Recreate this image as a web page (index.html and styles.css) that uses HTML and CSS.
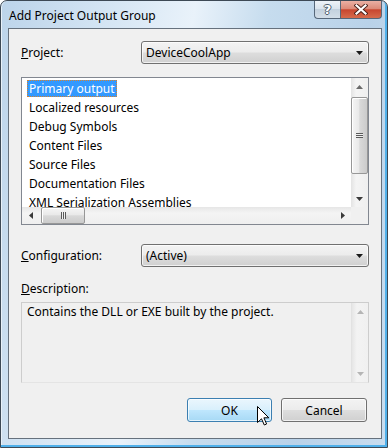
FILE: index.html
```html
<!DOCTYPE html>
<html lang="en">
<head>
  <meta charset="UTF-8">
  <title>Add Project Output Group</title>
  <link rel="stylesheet" href="styles.css">
</head>
<body>
  <div class="window">
    <div class="titlebar">
      <span class="title">Add Project Output Group</span>
      <div class="caption">
        <div class="cap help"><span>?</span></div>
        <div class="cap close">
          <svg width="14" height="11" viewBox="0 0 14 11">
            <path d="M2.5 1.5 L11.5 9.5 M11.5 1.5 L2.5 9.5" stroke="#4a2019" stroke-width="4" stroke-linecap="square"/>
            <path d="M2.5 1.5 L11.5 9.5 M11.5 1.5 L2.5 9.5" stroke="#fff" stroke-width="2.2" stroke-linecap="square"/>
          </svg>
        </div>
      </div>
    </div>

    <div class="client">
      <div class="field">
        <label><u>P</u>roject:</label>
        <div class="combo">
          <span>DeviceCoolApp</span>
          <svg class="drop" width="7" height="4" viewBox="0 0 7 4"><polygon points="0,0 7,0 3.5,4" fill="#1a1a1a"/></svg>
        </div>
      </div>

      <div class="listbox">
        <ul class="items">
          <li><span class="selected">Primary output</span></li>
          <li><span>Localized resources</span></li>
          <li><span>Debug Symbols</span></li>
          <li><span>Content Files</span></li>
          <li><span>Source Files</span></li>
          <li><span>Documentation Files</span></li>
          <li><span>XML Serialization Assemblies</span></li>
        </ul>
        <div class="vscroll">
          <div class="sbtn"><svg width="7" height="4" viewBox="0 0 7 4"><polygon points="0,4 7,4 3.5,0" fill="#6a6a6a"/></svg></div>
          <div class="vtrack"><div class="vthumb"><div class="grip-h"></div></div></div>
          <div class="sbtn"><svg width="7" height="4" viewBox="0 0 7 4"><polygon points="0,0 7,0 3.5,4" fill="#3a3a3a"/></svg></div>
        </div>
        <div class="hscroll">
          <div class="sbtn"><svg width="4" height="7" viewBox="0 0 4 7"><polygon points="4,0 4,7 0,3.5" fill="#3a3a3a"/></svg></div>
          <div class="htrack"><div class="hthumb"><div class="grip-v"></div></div></div>
          <div class="sbtn"><svg width="4" height="7" viewBox="0 0 4 7"><polygon points="0,0 0,7 4,3.5" fill="#3a3a3a"/></svg></div>
        </div>
        <div class="corner"></div>
      </div>

      <div class="field config">
        <label><u>C</u>onfiguration:</label>
        <div class="combo">
          <span>(Active)</span>
          <svg class="drop" width="7" height="4" viewBox="0 0 7 4"><polygon points="0,0 7,0 3.5,4" fill="#1a1a1a"/></svg>
        </div>
      </div>

      <div class="desc-label"><u>D</u>escription:</div>
      <div class="descbox">
        <div class="desc-text">Contains the DLL or EXE built by the project.</div>
        <div class="vscroll off">
          <div class="sbtn"><svg width="7" height="4" viewBox="0 0 7 4"><polygon points="0,4 7,4 3.5,0" fill="#b5b5b5"/></svg></div>
          <div class="vtrack"></div>
          <div class="sbtn"><svg width="7" height="4" viewBox="0 0 7 4"><polygon points="0,0 7,0 3.5,4" fill="#b5b5b5"/></svg></div>
        </div>
      </div>

      <div class="buttons">
        <button class="btn hover">OK</button>
        <button class="btn">Cancel</button>
      </div>
    </div>
  </div>

  <svg class="cursor" width="13" height="20" viewBox="0 0 13 20">
    <path d="M0.5 0.5 L0.5 16.5 L4.5 12.8 L7.3 19 L9.6 18 L6.9 11.8 L11.8 11.8 Z" fill="#fff" stroke="#000" stroke-width="1" stroke-linejoin="miter"/>
  </svg>
</body>
</html>
```

FILE: styles.css
```css
body {
  margin: 0;
  background: #fff;
  font-family: "Noto Sans", "Open Sans", sans-serif;
  font-size: 12px;
  color: #000;
}

.window {
  width: 388px;
  height: 448px;
  box-sizing: border-box;
  border: 1px solid #3d4955;
  border-radius: 7px 7px 0 0;
  padding: 0 5px 8px 7px;
  display: flex;
  flex-direction: column;
  background: linear-gradient(100deg, #bcd4ea 0%, #d6e6f4 25%, #e9f2fa 42%, #c6dcee 58%, #b9d2e9 80%, #c9ddef 100%);
  box-shadow: inset -2px -2px 0 #4fb0ea, inset 1px 0 0 #e8f1f9;
}

.titlebar {
  height: 27px;
  display: flex;
  justify-content: space-between;
  align-items: flex-start;
}

.title {
  padding: 7px 0 0 1px;
  line-height: 16px;
}

.caption {
  display: flex;
}

.cap {
  height: 18px;
  box-sizing: border-box;
  border: 1px solid #56677a;
  border-top: none;
  display: flex;
  align-items: center;
  justify-content: center;
}

.help {
  width: 26px;
  border-right: none;
  border-radius: 0 0 0 4px;
  background: linear-gradient(#eef3f8, #dae4ee 45%, #c3d1de 50%, #d3dee8);
}

.help span {
  font-family: "DejaVu Sans", sans-serif;
  font-weight: bold;
  font-size: 13px;
  line-height: 14px;
  color: #fff;
  text-shadow: 1px 0 0 #4d5d6d, -1px 0 0 #4d5d6d, 0 1px 0 #4d5d6d, 0 -1px 0 #4d5d6d;
}

.close {
  width: 42px;
  border-radius: 0 0 4px 0;
  background: linear-gradient(#eab0a4, #dc8b79 45%, #c8462f 52%, #d66b4c);
}

.client {
  flex: 1;
  border: 1px solid #66717d;
  background: #f0f0f0;
  padding: 12px 12px 0 12px;
  display: flex;
  flex-direction: column;
}

.field {
  display: grid;
  grid-template-columns: 120px 1fr;
  align-items: center;
  height: 23px;
}

.combo {
  height: 23px;
  box-sizing: border-box;
  border: 1px solid #707070;
  border-radius: 3px;
  padding: 0 5px 0 4px;
  display: flex;
  align-items: center;
  justify-content: space-between;
  background: linear-gradient(#f3f3f3, #ececec 48%, #dddddd 52%, #d0d0d0);
  box-shadow: inset 0 0 0 1px rgba(255, 255, 255, 0.7);
}

.listbox {
  margin-top: 13px;
  height: 148px;
  box-sizing: border-box;
  border: 1px solid #828790;
  background: #fff;
  display: grid;
  grid-template-columns: 1fr 17px;
  grid-template-rows: 1fr 17px;
}

.items {
  list-style: none;
  margin: 0;
  padding: 1px 0 0 5px;
  overflow: hidden;
}

.items li {
  height: 19px;
  display: flex;
  align-items: center;
  white-space: nowrap;
}

.items span {
  padding: 0 2px;
  line-height: 17px;
}

.items .selected {
  background: #3399ff;
  color: #fff;
  outline: 1px dotted #d9822b;
  outline-offset: -1px;
}

.vscroll {
  display: flex;
  flex-direction: column;
  background: linear-gradient(to right, #e3e3e3, #f4f4f4 30%, #efefef);
}

.sbtn {
  flex: 0 0 17px;
  display: flex;
  align-items: center;
  justify-content: center;
}

.vtrack {
  flex: 1;
  padding-top: 2px;
}

.vthumb {
  height: 77px;
  box-sizing: border-box;
  border: 1px solid #979797;
  border-radius: 2px;
  display: flex;
  align-items: center;
  justify-content: center;
  background: linear-gradient(to right, #f5f5f5, #e9e9e9 45%, #d9d9d9 52%, #cbcbcb);
  box-shadow: inset 1px 1px 0 #fff;
}

.grip-h {
  width: 7px;
  height: 5px;
  background: repeating-linear-gradient(to bottom, #5a5a5a 0 1px, #f0f0f0 1px 2px);
}

.hscroll {
  display: flex;
  background: linear-gradient(#e6e6e6, #f4f4f4 35%, #efefef);
}

.htrack {
  flex: 1;
  padding-left: 2px;
}

.hthumb {
  width: 44px;
  height: 17px;
  box-sizing: border-box;
  border: 1px solid #979797;
  border-radius: 2px;
  display: flex;
  align-items: center;
  justify-content: center;
  background: linear-gradient(#f5f5f5, #e9e9e9 45%, #d9d9d9 52%, #cbcbcb);
  box-shadow: inset 1px 1px 0 #fff;
}

.grip-v {
  width: 5px;
  height: 7px;
  background: repeating-linear-gradient(to right, #5a5a5a 0 1px, #f0f0f0 1px 2px);
}

.corner {
  background: #f0f0f0;
}

.config {
  margin-top: 19px;
}

.desc-label {
  margin-top: 14px;
  line-height: 16px;
}

.descbox {
  margin-top: 5px;
  height: 81px;
  box-sizing: border-box;
  border: 1px solid #cdcdcd;
  border-bottom-color: #e4e4e4;
  background: #f0f0f0;
  display: grid;
  grid-template-columns: 1fr 17px;
}

.desc-text {
  padding: 1px 5px 0 5px;
  line-height: 16px;
}

.vscroll.off {
  background: linear-gradient(to right, #e6e6e6, #f3f3f3 30%, #f0f0f0);
  border-left: 1px solid #e2e2e2;
}

.buttons {
  margin-top: 15px;
  display: flex;
  justify-content: flex-end;
  gap: 9px;
  padding-right: 2px;
}

.btn {
  height: 24px;
  box-sizing: border-box;
  font: inherit;
  color: #000;
  border: 1px solid #707070;
  border-radius: 3px;
  padding: 0;
  width: 86px;
  background: linear-gradient(#f3f3f3, #ececec 48%, #dddddd 52%, #d0d0d0);
  box-shadow: inset 0 0 0 1px rgba(255, 255, 255, 0.7);
}

.btn.hover {
  width: 85px;
  border-color: #3c7fb1;
  background: linear-gradient(#eaf6fd, #d9f0fc 48%, #bee6fd 52%, #a7d9f5);
}

.cursor {
  position: absolute;
  left: 257px;
  top: 406px;
}
```
